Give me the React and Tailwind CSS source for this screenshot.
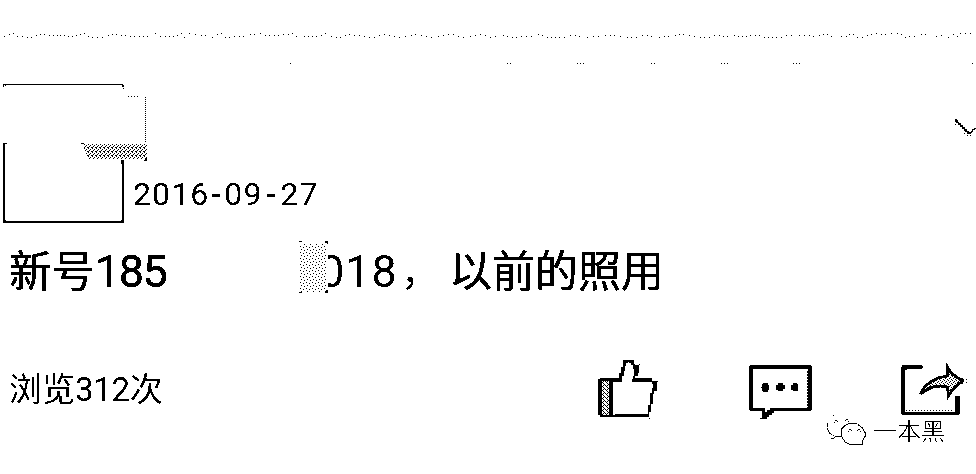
const WAVE = [
  [4,36],[9,34],[13,33],[17,36],[22,36],[27,37],[31,37],[36,35],[40,34],[44,34],[49,35],[53,35],[57,35],[60,35],[64,35],[68,36],[72,36],[76,35],[80,34],[84,33],[88,36],[92,37],[97,37],[102,37],[108,35],[112,34],[116,34],[121,35],[125,35],[130,36],[134,36],[139,36],[143,36],[147,36],[155,33],[160,36],[165,36],[169,36],[173,36],[177,35],[181,33],[184,37],[189,33],[195,34],[201,35],[205,35],[212,37],[217,34],[221,33],[225,37],[229,37],[234,36],[239,36],[243,36],[250,34],[254,34],[260,33],[265,35],[269,35],[274,35],[278,35],[283,34],[288,34],[292,33],[296,36],[304,36],[308,36],[312,36],[316,36],[321,35],[325,33],[331,36],[336,37],[340,37],[345,35],[349,34],[354,35],[359,35],[364,36],[369,37],[374,37],[379,35],[384,34],[389,35],[394,36],[399,37],[405,36],[411,35],[415,34],[421,35],[426,36],[431,37],[438,36],[443,35],[448,34],[453,34],[458,36],[463,37],[470,36],[475,35],[480,34],[485,35],[490,37],[495,36],
  [503,35],[507,36],[512,37],[516,37],[521,36],[526,36],[531,36],[538,34],[542,35],[547,37],[551,37],[555,37],[559,37],[564,37],[570,35],[575,35],[579,36],[587,37],[593,36],[598,36],[605,35],[610,35],[614,35],[620,36],[627,37],[631,37],[636,37],[642,35],[647,35],[651,36],[659,37],[664,36],[668,36],[675,35],[679,34],[683,34],[689,35],[694,36],[700,37],[704,37],[709,37],[714,35],[719,35],[723,36],[727,36],[734,35],[738,36],[742,36],[746,36],[750,35],[755,35],[759,35],[764,37],[768,37],[772,37],[776,37],[781,37],[786,35],[791,35],[799,35],[804,35],[809,35],[813,36],[819,35],[823,34],[827,34],[831,36],[841,36],[846,36],[849,34],[853,34],[857,37],[862,37],[867,35],[871,34],[876,33],[881,34],[885,34],[891,33],[897,33],[901,34],[905,37],[909,36],[914,36],[921,34],[925,34],[936,36],[941,35],[948,37],[953,34],[957,36],[960,33],[965,33],[970,33],
];
const SPECKS = [290, 507, 510, 577, 580, 583, 651, 654, 721, 724, 727, 793, 796, 799, 972];

function Filters() {
  return (
    <svg className="hidden" width="0" height="0">
      <defs>
        <filter id="crisp" x="-5%" y="-10%" width="110%" height="120%" colorInterpolationFilters="sRGB">
          <feComponentTransfer>
            <feFuncA type="discrete" tableValues="0 1" />
          </feComponentTransfer>
        </filter>
        <filter id="heavy" x="-5%" y="-10%" width="110%" height="120%" colorInterpolationFilters="sRGB">
          <feComponentTransfer>
            <feFuncA type="discrete" tableValues="0 1 1 1 1" />
          </feComponentTransfer>
        </filter>
      </defs>
    </svg>
  );
}

function Divider() {
  return (
    <svg className="block shrink-0" width="976" height="84" shapeRendering="crispEdges">
      {WAVE.map(([x, y]) => <rect key={x} x={x} y={y} width="1" height="1" />)}
      {SPECKS.map((x) => <rect key={x} x={x} y="63" width="1" height="1" />)}
    </svg>
  );
}

function Avatar() {
  return (
    <svg className="block shrink-0" width="134" height="140" viewBox="0 84 134 140" overflow="visible" shapeRendering="crispEdges">
      <defs>
        <pattern id="dither" width="4" height="4" patternUnits="userSpaceOnUse">
          <path d="M0 0h1v1H0zM2 1h1v1H2zM1 2h1v1H1zM3 3h1v1H3zM0 3h1v1H0z" />
        </pattern>
      </defs>
      <path d="M3 84h120v1H3zM3 85h1v2H3zM5 85h1v1H5zM122 85h2v2h-2zM123 88h1v1h-1z" />
      <path d="M3 143h4v1H5v76h1v1h115v-1h1v-56h-1v-4h3v63H3z" />
      <path d="M128 96.5h10" stroke="#000" strokeDasharray="1 2" />
      <path d="M145.5 97v46" stroke="#000" strokeDasharray="1 1" />
      <path d="M81 143h3v1h-3z" />
      <path d="M83 144h64v15H88z" fill="url(#dither)" />
      <path d="M145 158h2v3h-3v-1h1z" />
    </svg>
  );
}

function Chevron() {
  return (
    <svg className="mt-[34px] block" width="24" height="20" viewBox="952 118 24 20" shapeRendering="crispEdges">
      <path d="M955 119h2v1h1v2h1v1h2v2h2v2h2v2h2v2h2v1h2v-1h1v-2h2v-1h2v1h-1v1h-2v2h-1v1h-1v1h-4v-2h-2v-1h-1v-2h-2v-2h-2v-2h-2v-2h-2v-1h-1z" />
      <path d="M955 124h1v1h-1zM964 133h1v1h-1zM967 135h1v1h-1zM970 135h1v1h-1z" />
    </svg>
  );
}

function Like() {
  return (
    <svg className="block" width="62" height="64" viewBox="597 358 62 64" shapeRendering="crispEdges">
      <defs>
        <pattern id="thumbDots" width="4" height="4" patternUnits="userSpaceOnUse">
          <path d="M0 0h1v1H0zM2 2h1v1H2zM1 1h1v1H1zM3 3h1v1H3zM3 1h1v1H3z" />
        </pattern>
      </defs>
      <path d="M602 381h7v34h-7z" fill="url(#thumbDots)" />
      <path d="M600 378h19v-5h2v-6h2v-7h11v4h1v1h4v8h-1v3h-3v2h17v3h5v10h-3v3h-1v10h-2v8h-2v5h-49v-2h-2v-36h2zM626 363v3h-1v5h-1v5h-2v6h-9v33h2v-1h33v-9h2v-12h2v-5h1v-4h-1v-2h-20v-3h1v-3h1v-7h-1v-4h-2v-2h-2v-1zM602 381v34h7v-34z" fillRule="evenodd" />
      <path d="M639 364h1v1h-1zM657 381h1v1h-1zM649 418h1v1h-1z" />
    </svg>
  );
}

function Comment() {
  return (
    <svg className="block" width="64" height="56" viewBox="748 364 64 56" shapeRendering="crispEdges">
      <path d="M750 365h61v1h1v44h-1v1h-37v2h-2v2h-3v2h-2v2h-7v-1h2v-7h-12v-1h-1v-44h1zM753 369v39h12v4h2v-2h3v-2h38v-39z" fillRule="evenodd" />
      <path d="M807.5 371v38" stroke="#000" strokeDasharray="2 1" />
      <path d="M763 383h5v2h1v5h-1v2h-5v-1h-1v-3h-1v-1h1v-3h1zM778 383h5v2h2v4h-2v2h-5v-1h-2v-5h2zM793 383h4v1h1v7h-5v-1h-2v-5h2z" />
    </svg>
  );
}

function Share() {
  return (
    <svg className="block" width="68" height="52" viewBox="900 363 68 52" shapeRendering="crispEdges">
      <defs>
        <pattern id="arrowDots" width="4" height="4" patternUnits="userSpaceOnUse">
          <path d="M0 0h1v1H0zM2 1h1v1H2zM1 2h1v1H1zM3 3h1v1H3z" />
        </pattern>
      </defs>
      <path d="M902 365h20v1h1v2h-1v1h-15v1h-2v42h50v-16h5v18h-1v1h-57v-1h-1v-47h1z" />
      <path d="M906 410.5h48" stroke="#000" strokeDasharray="1 2" />
      <path d="M947.5 367l4 6 5 4 6 4-5 4-5 5-4 6-1-9-7-1-8 1-6 3-6 4 4-7 6-5 7-4 10-2z" fill="#fff" />
      <path d="M947.5 367l4 6 5 4 6 4-5 4-5 5-4 6-1-9-7-1-8 1-6 3-6 4 4-7 6-5 7-4 10-2z" fill="url(#arrowDots)" stroke="#000" strokeWidth="2.8" />
      <path d="M961 378h2v1h1v3h-1v2h-2zM966 379h1v1h-1zM966 382h1v1h-1z" />
    </svg>
  );
}

function WeChat() {
  return (
    <svg className="block" width="40" height="34" viewBox="827 414 40 34" shapeRendering="crispEdges">
      <g fill="none" stroke="#000">
        <path d="M827.5 423v6l2 4 4 3M832.5 415.5h1" strokeDasharray="4 1" />
        <path d="M831 438.5h2l3-2h5" />
        <path d="M841.500 437v-8l3-3 4-2.500h8M858 424.500l4 3 3 5v4l-3 5" />
        <path d="M842 437l3 5 4 2h13v-2" />
      </g>
      <path d="M834 422h1v1h-1zM835 420h2v1h-2zM837 421h1v1h-1zM845 420h1v1h-1zM846 419h2v1h-2zM848 421h1v1h-1zM848 431h1v1h-1zM849 429h2v1h-2zM851 430h1v1h-1zM857 430h1v1h-1zM858 429h2v1h-2zM860 431h1v1h-1z" />
    </svg>
  );
}

export default function App() {
  return (
    <main className="flex h-[474px] w-[976px] flex-col overflow-hidden bg-white font-['Roboto','Noto_Sans_CJK_SC',sans-serif] text-black">
      <Filters />
      <Divider />
      <header className="flex h-[140px]">
        <Avatar />
        <time className="-ml-px mt-[90px] flex h-10 items-center text-[32px] leading-10 tracking-[1.1px] [filter:url(#crisp)]">
          <span>2016</span><span className="w-[15px] text-center font-medium">-</span><span>09</span><span className="w-[18px] text-center font-medium">-</span><span>27</span>
        </time>
        <div className="grow" />
        <Chevron />
      </header>
      <h1 className="mt-[10px] flex h-[68px] items-start whitespace-nowrap text-[43px] leading-[76px]">
        <span className="ml-[9px] w-[86px] [filter:url(#heavy)]">新号</span>
        <span className="w-[204px] text-[45px] tracking-[-1.5px] [filter:url(#heavy)]">185</span>
        <svg className="relative z-10 mt-[6px] block bg-white" width="29" height="54" viewBox="299 240 29 54" shapeRendering="crispEdges">
          <defs>
            <pattern id="maskDots" width="6" height="6" patternUnits="userSpaceOnUse">
              <path d="M0 0h1v1H0zM3 1h1v1H3zM1 3h1v1H1zM4 4h1v1H4z" />
            </pattern>
          </defs>
          <path d="M300 244h27v48h-27z" fill="url(#maskDots)" />
          <path d="M299 241h3v1h-3zM325 241h3v3h-1v-1h-2zM299 292h3v1h-3zM326 290h2v3h-3v-1h1z" />
        </svg>
        <span className="-ml-[9px] w-[82px] text-[45px] tracking-[0.9px] [filter:url(#crisp)]">018</span>
        <span className="w-[48px] text-[38px] [filter:url(#crisp)]">，</span>
        <span className="[filter:url(#heavy)]">以前的照用</span>
      </h1>
      <footer className="mt-[56px] flex">
        <p className="ml-[9px] mt-[7px] flex h-[50px] w-[588px] items-center whitespace-nowrap text-[33px] leading-[50px] [filter:url(#crisp)]">
          <span>浏览</span><span className="tracking-[-0.3px]">312</span><span>次</span>
        </p>
        <Like />
        <div className="ml-[89px] mt-[6px]"><Comment /></div>
        <div className="ml-[88px] mt-[5px]"><Share /></div>
      </footer>
      <div className="-mt-[8px] ml-[827px] flex shrink-0 whitespace-nowrap">
        <WeChat />
        <span className="ml-[6px] mt-[1px] text-[24px] font-light leading-[34px] [filter:url(#crisp)]">一本黑</span>
      </div>
    </main>
  );
}
